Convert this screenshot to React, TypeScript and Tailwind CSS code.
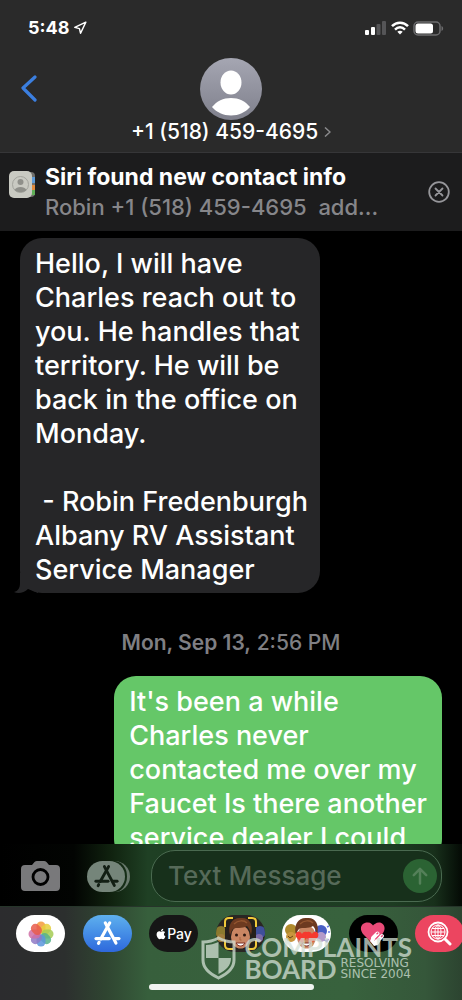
/**
 * MESSAGES THREAD — dark mode conversation view
 *
 * Top to bottom:
 *   - Status bar + contact header
 *   - Siri contact suggestion
 *   - Message bubbles
 *   - Composer, app strip, site watermark
 */

import type { ReactNode } from 'react';
import { Navigation } from 'lucide-react';
import { FaApple } from 'react-icons/fa';

const INCOMING = `Hello, I will have
Charles reach out to
you. He handles that
territory. He will be
back in the office on
Monday.

 - Robin Fredenburgh
Albany RV Assistant
Service Manager`;

const OUTGOING = `It's been a while
Charles never
contacted me over my
Faucet Is there another
service dealer I could`;

function SignalIcon() {
  return (
    <svg width="22" height="14" viewBox="0 0 22 14">
      <rect x="0" y="9" width="4" height="5" rx="1" fill="#fff" />
      <rect x="6" y="6" width="4" height="8" rx="1" fill="#fff" />
      <rect x="11.500" y="3" width="4" height="11" rx="1" fill="#555557" />
      <rect x="17" y="0" width="4" height="14" rx="1" fill="#555557" />
    </svg>
  );
}

function WifiIcon() {
  return (
    <svg width="18" height="14" viewBox="0 0 18 14" fill="none" stroke="#fff" strokeWidth="2.500">
      <path d="M1 5.200C5.500 .5 12.500 .5 17 5.200" />
      <path d="M4 8.600C7 5.600 11 5.600 14 8.600" />
      <path d="M6.300 10.700C8 9.300 10 9.300 11.700 10.700L9 13.600Z" fill="#fff" stroke="none" />
    </svg>
  );
}

function BatteryIcon() {
  return (
    <svg width="31" height="15" viewBox="0 0 31 15">
      <rect x="1" y="1" width="26" height="13" rx="4" fill="none" stroke="#6c6c6e" strokeWidth="1.500" />
      <rect x="2.500" y="2.500" width="17.500" height="10" rx="2.500" fill="#fff" />
      <path d="M28.500 5c2.200 .8 2.200 4.200 0 5z" fill="#6c6c6e" />
    </svg>
  );
}

function Avatar() {
  return (
    <svg width="62" height="62" viewBox="0 0 62 62">
      <defs>
        <linearGradient id="avatarBg" x1="0" y1="0" x2="0" y2="1">
          <stop offset="0" stopColor="#a5a6b2" />
          <stop offset="1" stopColor="#7f808c" />
        </linearGradient>
      </defs>
      <circle cx="31" cy="31" r="31" fill="url(#avatarBg)" />
      <ellipse cx="31" cy="24.500" rx="10.500" ry="12" fill="#fff" />
      <path d="M12 49c5-6 11-9 19-9s14 3 19 9c-5 5.500-11 8.500-19 8.500S17 54.500 12 49z" fill="#fff" />
    </svg>
  );
}

function ContactsIcon() {
  return (
    <svg width="26" height="27" viewBox="0 0 26 27" className="flex-shrink-0">
      <rect x="14" y="1" width="12" height="25" rx="4" fill="#6f6f6c" />
      <rect x="21" y="6" width="5" height="6" fill="#5d9ad6" />
      <rect x="21" y="14" width="5" height="5" fill="#e08a3c" />
      <rect x="21" y="19" width="5" height="5" fill="#5fae57" />
      <rect x="0" y="0" width="23" height="27" rx="5" fill="#c9cac2" />
      <circle cx="11.500" cy="13.500" r="8" fill="none" stroke="#a3a49d" strokeWidth="1" />
      <circle cx="11.500" cy="11" r="3" fill="#8f908a" />
      <path d="M5.500 19c2-4 10-4 12 0-3 3-9 3-12 0z" fill="#8f908a" />
    </svg>
  );
}

/* Three crossed sticks, shared by the composer button and the App Store pill */
function StoreGlyph({ size }: { size: number }) {
  return (
    <svg width={size} height={size} viewBox="0 0 24 24" fill="none" stroke="currentColor" strokeWidth="2.800" strokeLinecap="round">
      <path d="M14 2.500L6 16.800" />
      <path d="M10 2.500L19.500 20.500" />
      <path d="M1.800 16.500H13.500" />
      <path d="M18.500 16.500H22.200" />
      <path d="M4.500 19.800L4 20.800" />
    </svg>
  );
}

const PETALS = [
  { angle: 0, color: '#f39a3b' },
  { angle: 45, color: '#e6cf3c' },
  { angle: 90, color: '#a4cb53' },
  { angle: 135, color: '#57b38b' },
  { angle: 180, color: '#5b95dc' },
  { angle: 225, color: '#8f79c6' },
  { angle: 270, color: '#cf6fa6' },
  { angle: 315, color: '#e75c4b' },
];

function PhotosGlyph() {
  return (
    <svg width="26" height="26" viewBox="0 0 26 26">
      {PETALS.map(p => (
        <rect key={p.angle} x="8.500" y="0.500" width="9" height="12" rx="4.500" fill={p.color} opacity="0.850" transform={`rotate(${p.angle} 13 13)`} />
      ))}
    </svg>
  );
}

function MemojiFace({ hearts = false }: { hearts?: boolean }) {
  return (
    <>
      <ellipse cx="24.500" cy="22" rx="9.500" ry="11.500" fill="#c98663" />
      <path d="M20 28c2 4 7 4 9 0z" fill="#fff" stroke="#7b2f25" strokeWidth="1" />
      <path d="M14 20c-3-11 3-18 11-17 8-1 13 6 10 17-1-4-2-7-4-9-5 3-11 1-14 3-2 2-2 4-3 6z" fill="#6d3a20" />
      <path d="M18 9c4-4 10-4 13-1" stroke="#93552f" strokeWidth="1.500" fill="none" />
      {hearts ? (
        <>
          <path d="M20 28l-6-6c-2-5 4-7 6-3 2-4 8-2 6 3z" fill="#f5392f" />
          <path d="M30 28l-6-6c-2-5 4-7 6-3 2-4 8-2 6 3z" fill="#f5392f" />
        </>
      ) : (
        <>
          <circle cx="20.500" cy="20" r="1.500" fill="#2b1710" />
          <circle cx="28.500" cy="20" r="1.500" fill="#2b1710" />
          <path d="M24 22v3h1.500" stroke="#a9623f" strokeWidth="1" fill="none" />
        </>
      )}
    </>
  );
}

function MemojiGlyph() {
  return (
    <svg width="49" height="37" viewBox="0 0 49 37">
      <circle cx="5" cy="17" r="6" fill="#8b7a2f" />
      <circle cx="5" cy="23" r="4" fill="#a07d3c" />
      <circle cx="44" cy="17" r="6" fill="#3f4f9b" />
      <circle cx="43" cy="23" r="4" fill="#7c6ba8" />
      <rect x="9" y="3" width="31" height="31" rx="5" fill="#25201c" />
      <MemojiFace />
      <path d="M17 3h-4q-4 0-4 4v5M32 3h4q4 0 4 4v5M17 34h-4q-4 0-4-4v-5M32 34h4q4 0 4-4v-5" fill="none" stroke="#f0c93a" strokeWidth="2" />
    </svg>
  );
}

function StickersGlyph() {
  return (
    <svg width="49" height="37" viewBox="0 0 49 37">
      <circle cx="9" cy="15" r="6" fill="#b08a2c" />
      <circle cx="9" cy="22" r="5" fill="#c9963e" />
      <path d="M6 21l2 2 3-2" stroke="#6b4516" strokeWidth="1" fill="none" />
      <circle cx="39" cy="16" r="6" fill="#4a5fc4" />
      <circle cx="39" cy="22" r="5" fill="#b49ac9" />
      <path d="M42 25l5-1-2 4z" fill="#6a4fd0" />
      <path d="M45 12l2-1M46 17h2" stroke="#6a7fe0" strokeWidth="1.500" />
      <MemojiFace hearts />
    </svg>
  );
}

/* Heart with two raised fingers at its lower right */
function DigitalTouchGlyph() {
  return (
    <svg width="26" height="26" viewBox="0 0 26 26">
      <path d="M13 23L3 13C-2 6 3 1 8 1.500c3 0 4 2 5 3 1-1 3-3 6-3 5 0 8 6 3 12z" fill="#ea4a78" />
      <path d="M13 17l4.500-4.500M18 19.500l4-4.500" stroke="#fff" strokeWidth="4" strokeLinecap="round" />
      <path d="M11.500 16.500l-1.500 3.500 4 5 4-1 2.500-4z" fill="#fff" />
      <path d="M17 12.800l.8-.8M21.500 15.500l.8-.8" stroke="#ea4a78" strokeWidth="1.500" strokeLinecap="round" />
      <path d="M14.500 19.500l4-5" stroke="#ea4a78" strokeWidth="0.700" />
    </svg>
  );
}

function ImageSearchGlyph() {
  return (
    <svg width="25" height="25" viewBox="0 0 25 25" fill="none" stroke="#fff">
      <circle cx="11" cy="11" r="9.500" strokeWidth="1.800" />
      <circle cx="11" cy="11" r="7" strokeWidth="1" />
      <ellipse cx="11" cy="11" rx="3" ry="7" strokeWidth="1" />
      <path d="M4 11h14M5 7.500h12M5 14.500h12M11 4v14" strokeWidth="1" />
      <path d="M18 18l5 5" strokeWidth="3" strokeLinecap="round" />
    </svg>
  );
}

function CameraIcon() {
  return (
    <svg width="39" height="31" viewBox="0 0 39 31">
      <path d="M4 4h7l2.500-3q1-1 2.500-1h7q1.500 0 2.500 1L28 4h7q4 0 4 4v18q0 4-4 4H4q-4 0-4-4V8q0-4 4-4z" fill="#79797b" />
      <circle cx="19.500" cy="16" r="7.500" fill="none" stroke="#000" strokeWidth="2.800" />
    </svg>
  );
}

function ShieldLogo() {
  return (
    <svg width="35" height="44" viewBox="0 0 35 44">
      <path d="M17.500 2C12 5 7 6 2 6v18c0 9 7 14 15.500 18C26 38 33 33 33 24V6C28 6 23 5 17.500 2z" fill="none" stroke="#d3e0d5" strokeWidth="3" />
      <path d="M17.500 6C13 8 9 9 5 9v13h12.500zM17.500 22H30c0 8-5 12-12.500 16z" fill="#d3e0d5" />
    </svg>
  );
}

const APPS: { label: string; className: string; glyph: ReactNode }[] = [
  { label: 'Photos', className: 'bg-white', glyph: <PhotosGlyph /> },
  { label: 'App Store', className: 'bg-gradient-to-b from-[#5fb0ee] to-[#2f68dc] text-white', glyph: <StoreGlyph size={27} /> },
  {
    label: 'Apple Pay',
    className: 'bg-[#161616] text-white',
    glyph: (
      <span className="flex items-center text-[14px] leading-5 font-medium">
        <FaApple className="w-3 h-3" />Pay
      </span>
    ),
  },
  { label: 'Memoji', className: 'bg-[#2a2623]', glyph: <MemojiGlyph /> },
  { label: 'Memoji Stickers', className: 'bg-white', glyph: <StickersGlyph /> },
  { label: 'Digital Touch', className: 'bg-black', glyph: <DigitalTouchGlyph /> },
  { label: '#images', className: 'bg-[#ec4560]', glyph: <ImageSearchGlyph /> },
];

export default function App() {
  return (
    <div className="flex flex-col h-screen overflow-hidden bg-black text-white font-['Inter',sans-serif]">
      {/* Header */}
      <header className="flex-shrink-0 bg-[#2a2a2a] border-b border-[#363638] pb-2">
        <div className="flex items-center justify-between pl-7 pr-[18px] pt-4">
          <div className="flex items-center gap-1">
            <span className="text-[18px] leading-6 font-bold">5:48</span>
            <Navigation className="w-3.5 h-3.5" strokeWidth={2.5} />
          </div>
          <div className="flex items-center gap-1">
            <SignalIcon />
            <WifiIcon />
            <BatteryIcon />
          </div>
        </div>
        <div className="grid grid-cols-[1fr_auto_1fr] pt-[18px]">
          <button aria-label="Back" className="justify-self-start self-start pl-5 pt-4">
            <svg width="18" height="28" viewBox="0 0 18 28" fill="none" stroke="#3b7fe0" strokeWidth="3.200" strokeLinecap="round" strokeLinejoin="round">
              <path d="M15 3L3 14l12 12" />
            </svg>
          </button>
          <button className="flex flex-col items-center">
            <Avatar />
            <span className="flex items-center gap-1.5 text-[21px] leading-6 font-medium">
              +1 (518) 459-4695
              <svg width="7" height="10" viewBox="0 0 7 10" fill="none" stroke="#8a8a8c" strokeWidth="1.500">
                <path d="M1 .5l5 4.500-5 4.500" />
              </svg>
            </span>
          </button>
        </div>
      </header>

      {/* Siri suggestion */}
      <section className="flex items-center flex-shrink-0 gap-2.5 bg-[#1c1c1d] pl-[9px] pr-3 py-[9px]">
        <div className="self-start pt-[9px]"><ContactsIcon /></div>
        <div className="flex-1 min-w-0">
          <h2 className="text-[23px] leading-[30px] font-bold">Siri found new contact info</h2>
          <p className="text-[22px] leading-[30px] font-medium text-[#86868a] whitespace-pre">Robin +1 (518) 459-4695  add...</p>
        </div>
        <button aria-label="Dismiss">
          <svg width="22" height="22" viewBox="0 0 22 22" fill="none" stroke="#96969a" strokeWidth="1.800" strokeLinecap="round">
            <circle cx="11" cy="11" r="9.800" />
            <path d="M7.500 7.500l7 7M14.500 7.500l-7 7" />
          </svg>
        </button>
      </section>

      {/* Thread */}
      <main className="flex flex-col flex-1 min-h-0 overflow-hidden px-5 pt-[7px] text-[27px] leading-[34px] font-medium">
        <div className="relative self-start flex-shrink-0 rounded-[22px] bg-[#262628] pl-[15px] pr-3 pt-[9px] pb-[6px]">
          <svg width="24" height="20" viewBox="0 0 24 20" className="absolute bottom-0 -left-1.5">
            <path d="M6 0v10c0 5-2 8-6 9 4 2 10 1 14-3l10 4V0z" fill="#262628" />
          </svg>
          <p className="relative whitespace-pre">{INCOMING}</p>
        </div>
        <p className="flex-shrink-0 pt-[38px] pb-[21px] text-center text-[21px] leading-6 text-[#7f7f83]">
          <span className="font-semibold">Mon, Sep 13,</span> 2:56 PM
        </p>
        <div className="self-end flex-shrink-0 rounded-[22px] bg-[#65c768] px-[15px] pt-[9px] pb-[6px]">
          <p className="whitespace-pre">{OUTGOING}</p>
        </div>
      </main>

      {/* Composer */}
      <form className="flex items-center flex-shrink-0 gap-[21px] pl-[21px] pr-5 pt-[6px] pb-1 bg-[linear-gradient(90deg,#000_0%,#020402_16%,#10220f_24%,#1f4024_32%,#1d3c22_85%,#18301b_94%,#040a05_100%)]">
        <button type="button" aria-label="Camera" className="flex-shrink-0 pr-1.5"><CameraIcon /></button>
        <button type="button" aria-label="Apps" className="flex flex-shrink-0">
          <span className="relative z-10 flex items-center justify-center w-[38px] h-[31px] rounded-full bg-[#75857a] text-[#121f14]">
            <StoreGlyph size={25} />
          </span>
          <span className="w-[18px] h-[31px] -ml-[13px] rounded-r-full border-r-[3px] border-[#6a7a6e]" />
        </button>
        <div className="flex items-center flex-1 min-w-0 h-[52px] pl-4 pr-1 rounded-[24px] border border-[#4a6a50] bg-[#17301b]">
          <input
            type="text"
            aria-label="Text Message"
            placeholder="Text Message"
            className="flex-1 min-w-0 bg-transparent outline-none text-[26px] leading-8 font-medium placeholder:text-[#566a59]"
          />
          <button type="button" aria-label="Send" className="flex items-center justify-center flex-shrink-0 w-[34px] h-[34px] rounded-full bg-[#2b6333]">
            <svg width="16" height="18" viewBox="0 0 18 20" fill="none" stroke="#548059" strokeWidth="2.800" strokeLinecap="round" strokeLinejoin="round">
              <path d="M9 18.500V2M2 9l7-7 7 7" />
            </svg>
          </button>
        </div>
      </form>

      {/* App strip */}
      <footer className="relative flex-shrink-0 pt-2 pb-[10px] border-t border-[#26352a] bg-[linear-gradient(90deg,#2c2c2e_0%,#2c2f2e_14%,#2f4531_23%,#375f3c_32%,#38623d_75%,#35573a_92%,#2c4430_100%)]">
        <div className="flex justify-between pl-4 -mr-0.5">
          {APPS.map(app => (
            <button
              key={app.label}
              aria-label={app.label}
              className={`flex items-center justify-center flex-shrink-0 w-[49px] h-[37px] rounded-full overflow-hidden ${app.className}`}
            >
              {app.glyph}
            </button>
          ))}
        </div>
        <div className="w-[165px] h-[6px] mt-8 mx-auto rounded-full bg-[#f1f4f1]" />

        {/* Watermark */}
        <div className="absolute right-[50px] bottom-5 flex items-center gap-2 opacity-75 pointer-events-none text-[#d3e0d5] font-['Lato',sans-serif]">
          <ShieldLogo />
          <div className="font-bold text-[26px] leading-[22px]">
            <div>COMPLAINTS</div>
            <div className="flex items-center gap-1">
              <span>BOARD</span>
              <span className="font-['DejaVu_Sans',sans-serif] font-normal text-[12px] leading-[11px]">
                RESOLVING<br />SINCE 2004
              </span>
            </div>
          </div>
        </div>
      </footer>
    </div>
  );
}
